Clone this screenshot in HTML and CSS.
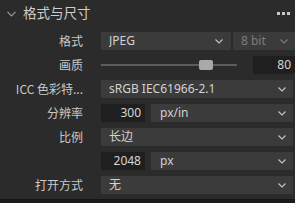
FILE: index.html
```html
<!DOCTYPE html>
<html>
<head>
<meta charset="utf-8">
<link rel="stylesheet" href="styles.css">
</head>
<body>
<div class="panel">
  <div class="header">
    <svg class="hchev" width="9" height="6" viewBox="0 0 9 6"><path d="M0.5 0.8 L4.5 4.8 L8.5 0.8" fill="none" stroke="#9a9a9a" stroke-width="1.2"/></svg>
    <span class="title">格式与尺寸</span>
    <span class="dots"><i></i><i></i><i></i></span>
  </div>
  <div class="rows">
    <div class="label">格式</div>
    <div class="ctrl split-wide over">
      <div class="select"><span>JPEG</span><svg class="chev" width="8" height="5" viewBox="0 0 8 5"><path d="M0.5 0.5 L4 4 L7.5 0.5" fill="none" stroke="#c4c4c4" stroke-width="1.1"/></svg></div>
      <div class="select disabled"><span>8 bit</span><svg class="chev" width="8" height="5" viewBox="0 0 8 5"><path d="M0.5 0.5 L4 4 L7.5 0.5" fill="none" stroke="#7a7a7a" stroke-width="1.1"/></svg></div>
    </div>

    <div class="label">画质</div>
    <div class="ctrl slider-row over">
      <div class="slider"><div class="track"></div><div class="thumb"></div></div>
      <div class="input">80</div>
    </div>

    <div class="label">ICC 色彩特...</div>
    <div class="ctrl">
      <div class="select"><span>sRGB IEC61966-2.1</span><svg class="chev" width="8" height="5" viewBox="0 0 8 5"><path d="M0.5 0.5 L4 4 L7.5 0.5" fill="none" stroke="#c4c4c4" stroke-width="1.1"/></svg></div>
    </div>

    <div class="label">分辨率</div>
    <div class="ctrl split-num">
      <div class="input">300</div>
      <div class="select"><span>px/in</span><svg class="chev" width="8" height="5" viewBox="0 0 8 5"><path d="M0.5 0.5 L4 4 L7.5 0.5" fill="none" stroke="#c4c4c4" stroke-width="1.1"/></svg></div>
    </div>

    <div class="label">比例</div>
    <div class="ctrl">
      <div class="select"><span>长边</span><svg class="chev" width="8" height="5" viewBox="0 0 8 5"><path d="M0.5 0.5 L4 4 L7.5 0.5" fill="none" stroke="#c4c4c4" stroke-width="1.1"/></svg></div>
    </div>

    <div class="label"></div>
    <div class="ctrl split-num">
      <div class="input">2048</div>
      <div class="select"><span>px</span><svg class="chev" width="8" height="5" viewBox="0 0 8 5"><path d="M0.5 0.5 L4 4 L7.5 0.5" fill="none" stroke="#c4c4c4" stroke-width="1.1"/></svg></div>
    </div>

    <div class="label">打开方式</div>
    <div class="ctrl">
      <div class="select"><span>无</span><svg class="chev" width="8" height="5" viewBox="0 0 8 5"><path d="M0.5 0.5 L4 4 L7.5 0.5" fill="none" stroke="#c4c4c4" stroke-width="1.1"/></svg></div>
    </div>
  </div>
</div>
</body>
</html>
```

FILE: styles.css
```css
html, body {
  margin: 0;
  padding: 0;
  background: #1c1c1c;
  overflow: hidden;
}
body {
  width: 295px;
  height: 203px;
  font-family: "Noto Sans", "Noto Sans CJK SC", sans-serif;
  font-size: 12px;
  color: #cfcfcf;
}
.panel {
  background: #2b2b2b;
  height: 200px;
  border-bottom: 1px solid #161616;
  box-sizing: border-box;
  overflow: hidden;
}
.header {
  height: 26px;
  display: flex;
  align-items: center;
  padding-left: 7px;
  padding-right: 4px;
}
.hchev {
  margin-top: 1px;
}
.title {
  margin-left: 7px;
  font-size: 13.5px;
  color: #cdcdcd;
  font-family: "Noto Sans CJK SC", sans-serif;
  line-height: 1;
}
.dots {
  margin-left: auto;
  display: flex;
  gap: 2px;
  margin-right: 1px;
}
.dots i {
  display: block;
  width: 3px;
  height: 3px;
  background: #c8c8c8;
}
.rows {
  display: grid;
  grid-template-columns: 83px 1fr;
  column-gap: 18px;
  row-gap: 6px;
  padding-top: 6px;
  padding-right: 2px;
  grid-auto-rows: 18px;
}
.label {
  text-align: right;
  line-height: 18px;
  color: #c9c9c9;
  white-space: nowrap;
  font-family: "Noto Sans CJK SC", sans-serif;
}
.ctrl {
  display: flex;
  min-width: 0;
}
.over {
  margin-right: -2px;
}
.select {
  flex: 1;
  background: #3b3b3b;
  display: flex;
  align-items: center;
  padding: 0 7px 0 8px;
  min-width: 0;
  color: #d2d2d2;
  line-height: 18px;
}
.select span {
  flex: 1;
  white-space: nowrap;
  overflow: hidden;
}
.select.disabled {
  color: #7c7c7c;
}
.split-wide {
  gap: 2px;
}
.split-wide .select:first-child {
  flex: 0 0 130px;
  box-sizing: border-box;
  padding-right: 8px;
}
.split-wide .select.disabled {
  padding-left: 8px;
}
.split-num {
  gap: 6px;
}
.split-num .input {
  flex: 0 0 44px;
}
.split-num .select {
  padding-left: 9px;
}
.input {
  background: #1f1f1f;
  text-align: right;
  padding-right: 4px;
  box-sizing: border-box;
  line-height: 18px;
  color: #d6d6d6;
}
.slider-row {
  gap: 16px;
  align-items: center;
}
.slider {
  flex: 0 0 136px;
  height: 18px;
  position: relative;
}
.track {
  position: absolute;
  left: 0;
  right: 0;
  top: 8px;
  height: 2px;
  background: #5c5c5c;
}
.thumb {
  position: absolute;
  left: 98px;
  top: 4px;
  width: 14px;
  height: 10px;
  border-radius: 2px;
  background: #a9a9a9;
}
.slider-row .input {
  flex: 1;
  height: 18px;
}
```
